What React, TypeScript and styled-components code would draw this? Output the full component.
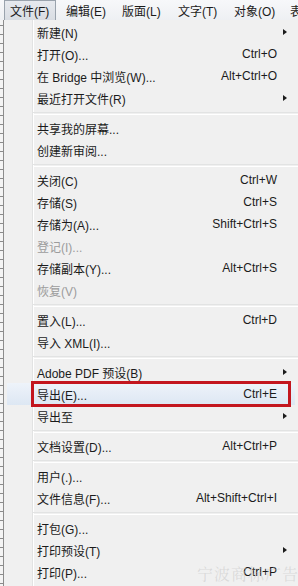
import styled, { createGlobalStyle } from 'styled-components';

type Entry =
  | { kind: 'item'; label: string; shortcut?: string; submenu?: boolean; disabled?: boolean; active?: boolean }
  | { kind: 'sep' };

const GlobalStyle = createGlobalStyle`
  html, body {
    margin: 0;
    padding: 0;
    background: #ffffff;
  }
  body {
    font-family: "Liberation Sans", "Noto Sans CJK SC", sans-serif;
  }
`;

const Screen = styled.div`
  position: relative;
  width: 298px;
  height: 586px;
  overflow: hidden;
  display: flex;
  flex-direction: column;
  font-size: 12px;
  color: #1b1b1b;
`;

const MenuBar = styled.div`
  height: 20px;
  flex: none;
  display: flex;
  align-items: stretch;
  padding-left: 4px;
  overflow: hidden;
  background: linear-gradient(#f7f8fa, #eef0f3);
  white-space: nowrap;
`;

const MenuTitle = styled.div<{ $open?: boolean }>`
  box-sizing: border-box;
  flex: none;
  width: 52px;
  margin-right: 4px;
  padding-left: 5px;
  display: flex;
  align-items: center;
  border: 1px solid ${(p) => (p.$open ? '#9aa3ad' : 'transparent')};
  border-bottom: none;
  background: ${(p) => (p.$open ? 'linear-gradient(#e6e9ee, #d9dde3)' : 'transparent')};
`;

const Body = styled.div`
  flex: 1;
  display: flex;
  min-height: 0;
`;

const PageEdge = styled.div`
  width: 3px;
  flex: none;
  background:
    repeating-linear-gradient(180deg, transparent 0 5px, #8a8a8a 5px 6px, transparent 6px 9px),
    #f4f4f4;
`;

const Menu = styled.div`
  flex: 1;
  border-left: 1px solid #8c8c8c;
  padding-top: 1px;
  background:
    linear-gradient(90deg, transparent 28px, #e2e3e3 28px, #e2e3e3 29px, #ffffff 29px, #ffffff 30px, transparent 30px),
    #f0f0f0;
`;

const Row = styled.div<{ $disabled?: boolean; $active?: boolean }>`
  position: relative;
  height: 22px;
  display: flex;
  align-items: center;
  margin-left: ${(p) => (p.$active ? '3px' : '0')};
  padding-left: ${(p) => (p.$active ? '30px' : '33px')};
  margin-right: ${(p) => (p.$active ? '3px' : '0')};
  padding-right: ${(p) => (p.$active ? '18px' : '21px')};
  color: ${(p) => (p.$disabled ? '#9c9c9c' : '#1b1b1b')};
  background: ${(p) => (p.$active ? 'linear-gradient(#eef3fa, #dde7f3)' : 'transparent')};
  white-space: nowrap;
`;

const Label = styled.span`
  flex: 1;
`;

const Shortcut = styled.span`
  flex: none;
`;

const Arrow = styled.span`
  position: absolute;
  right: 11px;
  top: 8px;
  width: 0;
  height: 0;
  border-top: 3.5px solid transparent;
  border-bottom: 3.5px solid transparent;
  border-left: 4px solid #1b1b1b;
`;

const Annotation = styled.div`
  position: absolute;
  left: 24px;
  right: 4px;
  top: -2px;
  bottom: -2px;
  border: 3px solid #c3161f;
  pointer-events: none;
`;

const Separator = styled.div`
  height: 8px;
  margin-left: 29px;
  display: flex;
  align-items: center;
  &::before {
    content: '';
    flex: 1;
    height: 1px;
    border-top: 1px solid #e2e3e3;
    border-bottom: 1px solid #ffffff;
  }
`;

const Watermark = styled.div`
  position: absolute;
  left: 197px;
  bottom: 1px;
  font-family: "Noto Serif CJK SC", "Noto Sans CJK SC", serif;
  font-size: 16px;
  letter-spacing: 1px;
  white-space: nowrap;
  color: rgba(190, 190, 190, 0.45);
  pointer-events: none;
`;

const titles = ['文件(F)', '编辑(E)', '版面(L)', '文字(T)', '对象(O)', '表'];

const entries: Entry[] = [
  { kind: 'item', label: '新建(N)', submenu: true },
  { kind: 'item', label: '打开(O)...', shortcut: 'Ctrl+O' },
  { kind: 'item', label: '在 Bridge 中浏览(W)...', shortcut: 'Alt+Ctrl+O' },
  { kind: 'item', label: '最近打开文件(R)', submenu: true },
  { kind: 'sep' },
  { kind: 'item', label: '共享我的屏幕...' },
  { kind: 'item', label: '创建新审阅...' },
  { kind: 'sep' },
  { kind: 'item', label: '关闭(C)', shortcut: 'Ctrl+W' },
  { kind: 'item', label: '存储(S)', shortcut: 'Ctrl+S' },
  { kind: 'item', label: '存储为(A)...', shortcut: 'Shift+Ctrl+S' },
  { kind: 'item', label: '登记(I)...', disabled: true },
  { kind: 'item', label: '存储副本(Y)...', shortcut: 'Alt+Ctrl+S' },
  { kind: 'item', label: '恢复(V)', disabled: true },
  { kind: 'sep' },
  { kind: 'item', label: '置入(L)...', shortcut: 'Ctrl+D' },
  { kind: 'item', label: '导入 XML(I)...' },
  { kind: 'sep' },
  { kind: 'item', label: 'Adobe PDF 预设(B)', submenu: true },
  { kind: 'item', label: '导出(E)...', shortcut: 'Ctrl+E', active: true },
  { kind: 'item', label: '导出至', submenu: true },
  { kind: 'sep' },
  { kind: 'item', label: '文档设置(D)...', shortcut: 'Alt+Ctrl+P' },
  { kind: 'sep' },
  { kind: 'item', label: '用户(.)...' },
  { kind: 'item', label: '文件信息(F)...', shortcut: 'Alt+Shift+Ctrl+I' },
  { kind: 'sep' },
  { kind: 'item', label: '打包(G)...' },
  { kind: 'item', label: '打印预设(T)', submenu: true },
  { kind: 'item', label: '打印(P)...', shortcut: 'Ctrl+P' },
];

export default function App() {
  return (
    <>
      <GlobalStyle />
      <Screen>
        <MenuBar>
          {titles.map((t, i) => (
            <MenuTitle key={t} $open={i === 0}>{t}</MenuTitle>
          ))}
        </MenuBar>
        <Body>
          <PageEdge />
          <Menu>
            {entries.map((e, i) =>
              e.kind === 'sep' ? (
                <Separator key={i} />
              ) : (
                <Row key={i} $disabled={e.disabled} $active={e.active}>
                  <Label>{e.label}</Label>
                  {e.shortcut && <Shortcut>{e.shortcut}</Shortcut>}
                  {e.submenu && <Arrow />}
                  {e.active && <Annotation />}
                </Row>
              )
            )}
          </Menu>
        </Body>
        <Watermark>宁波商标广告</Watermark>
      </Screen>
    </>
  );
}
